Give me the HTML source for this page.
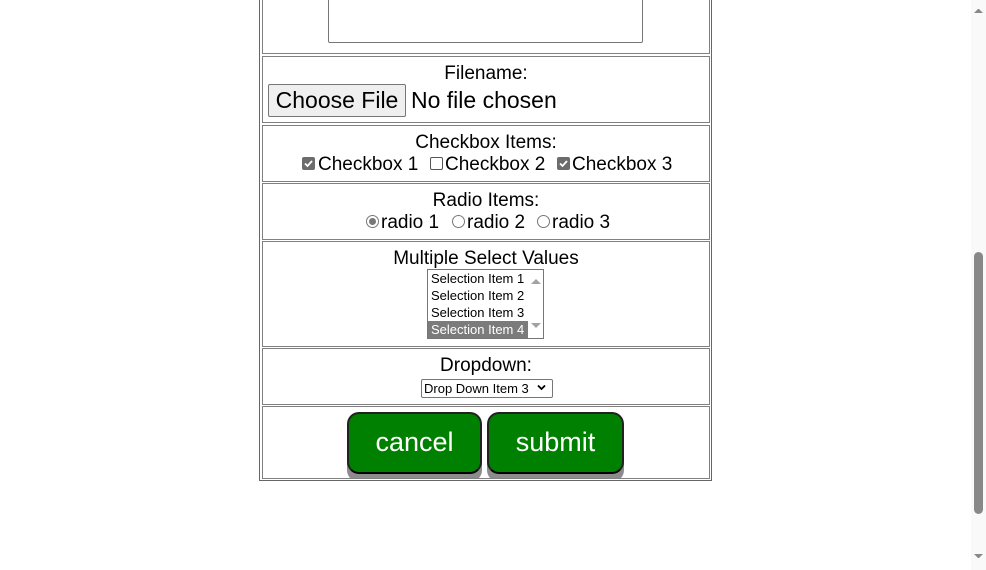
<!DOCTYPE html>
<html><head><style>
body{margin:0;width:986px;height:570px;overflow:hidden;background:#fff;font-family:"Liberation Sans",Arial,sans-serif;position:relative;color:#000}
.a{position:absolute}
.cell{position:absolute;left:262px;width:446px;border:1px solid #808080}
.t{position:absolute;left:0;width:100%;text-align:center;font-size:19px;line-height:20px}
.s{position:absolute;font-size:19px;line-height:20px;white-space:nowrap}
.btn{position:absolute;height:58px;background:#008000;border:2px solid #222;border-bottom-color:#000;border-radius:12px;box-shadow:0 8px 0 #8c8c8c;color:#fff;font-size:27px;text-align:center;line-height:56px}
.cb{position:absolute;width:13px;height:13px;border-radius:2px;box-sizing:border-box}
.rd{position:absolute;width:13px;height:13px;border-radius:50%;border:1px solid #777;box-sizing:border-box}
</style></head><body>
<div class="a" style="left:259px;top:-2px;width:451px;height:482px;border:1px solid #666;border-top:none"></div>
<div class="cell" style="top:-2px;height:54px"></div>
<div class="a" style="left:328px;top:-2px;width:313px;height:43px;border:1px solid #767676;border-radius:2px"></div>
<div class="cell" style="top:56px;height:65px">
 <div class="t" style="top:7px">Filename:</div>
 <div class="a" style="left:5px;top:27px;width:138px;height:33px;background:#efefef;border:1px solid #767676;border-radius:2px;box-sizing:border-box;font-size:23px;line-height:31px;text-align:center">Choose File</div>
 <div class="a" style="left:148px;top:29px;font-size:23px;line-height:28px">No file chosen</div>
</div>
<div class="cell" style="top:125px;height:55px">
 <div class="t" style="top:7px">Checkbox Items:</div>
</div>
<svg class="a" style="left:302px;top:157px" width="13" height="13"><rect width="13" height="13" rx="2" fill="#6c6c6c"/><path d="M3 6.5l2.5 2.5 4.5-5" stroke="#fff" stroke-width="1.8" fill="none"/></svg>
<div class="s" style="left:318px;top:155px">Checkbox 1</div>
<div class="cb" style="left:430px;top:157px;border:1px solid #555"></div>
<div class="s" style="left:445px;top:155px">Checkbox 2</div>
<svg class="a" style="left:557px;top:157px" width="13" height="13"><rect width="13" height="13" rx="2" fill="#6c6c6c"/><path d="M3 6.5l2.5 2.5 4.5-5" stroke="#fff" stroke-width="1.8" fill="none"/></svg>
<div class="s" style="left:572px;top:155px">Checkbox 3</div>
<div class="cell" style="top:183px;height:55px">
 <div class="t" style="top:7px">Radio Items:</div>
</div>
<div class="rd" style="left:366px;top:215px"><div class="a" style="left:2px;top:2px;width:7px;height:7px;border-radius:50%;background:#777"></div></div>
<div class="s" style="left:381px;top:213px">radio 1</div>
<div class="rd" style="left:452px;top:215px"></div>
<div class="s" style="left:467px;top:213px">radio 2</div>
<div class="rd" style="left:537px;top:215px"></div>
<div class="s" style="left:552px;top:213px">radio 3</div>
<div class="cell" style="top:241px;height:104px">
 <div class="t" style="top:7px">Multiple Select Values</div>
</div>
<div class="a" style="left:427px;top:269px;width:115px;height:68px;border:1px solid #767676;font-size:13px;line-height:17px;overflow:hidden;white-space:nowrap">
 <div style="padding-left:3px">Selection Item 1</div>
 <div style="padding-left:3px">Selection Item 2</div>
 <div style="padding-left:3px">Selection Item 3</div>
 <div style="padding-left:3px;background:#7b7b7b;color:#fff;width:97px">Selection Item 4</div>
 <div class="a" style="left:103px;top:9px;width:0;height:0;border:5px solid transparent;border-bottom:5px solid #a3a3a3;border-top:0"></div>
 <div class="a" style="left:103px;top:53px;width:0;height:0;border:5px solid transparent;border-top:5px solid #a3a3a3;border-bottom:0"></div>
</div>
<div class="cell" style="top:348px;height:55px">
 <div class="t" style="top:7px">Dropdown:</div>
</div>
<div class="a" style="left:421px;top:379px;width:128px;height:17px;border:1px solid #767676;border-radius:2px;font-size:13px;line-height:17px;padding-left:2px;white-space:nowrap">Drop Down Item 3</div>
<svg class="a" style="left:537px;top:384px" width="9" height="7"><path d="M1 1.5l3.5 3.5 3.5-3.5" stroke="#000" stroke-width="1.8" fill="none"/></svg>
<div class="cell" style="top:406px;height:71px;overflow:hidden">
 <div class="btn" style="left:84px;top:5px;width:131px">cancel</div>
 <div class="btn" style="left:224px;top:5px;width:133px">submit</div>
</div>
<div class="a" style="left:971px;top:0;width:15px;height:570px;background:#f9f9f9"></div>
<div class="a" style="left:974px;top:252px;width:9px;height:262px;background:#888;border-radius:5px"></div>
<div class="a" style="left:974px;top:9px;border:4px solid transparent;border-bottom:4px solid #888;border-top:0;width:1px"></div>
<div class="a" style="left:974px;top:554px;border:4px solid transparent;border-top:4px solid #888;border-bottom:0;width:1px"></div>
</body></html>
